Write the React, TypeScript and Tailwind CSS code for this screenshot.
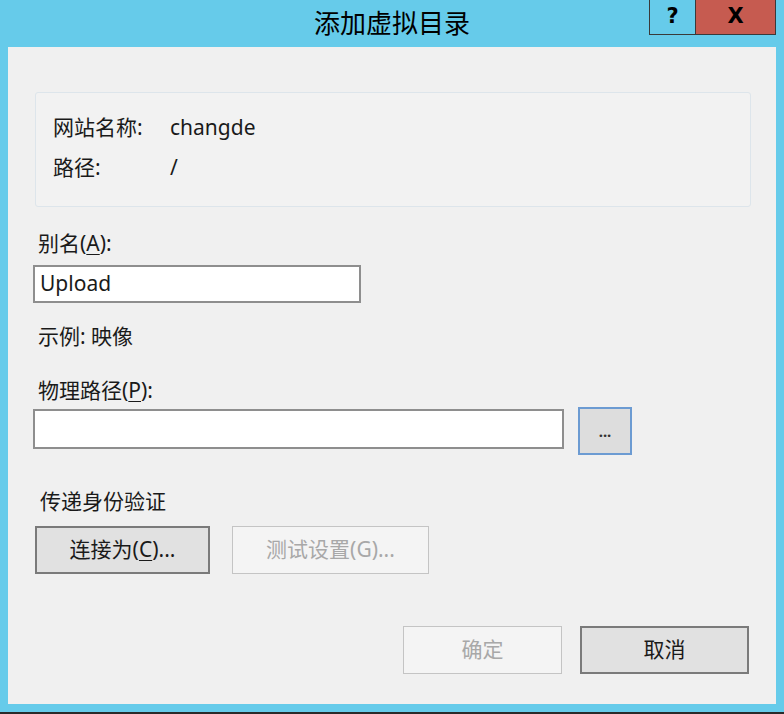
const ui = { fontFamily: '"Noto Sans", "Noto Sans CJK SC", sans-serif' };
const glyph = { fontFamily: '"DejaVu Sans", sans-serif' };

function Key({ k }: { k: string }) {
  return <span className="underline underline-offset-[3px] decoration-1">{k}</span>;
}

function WinButton({
  children,
  disabled,
  className,
}: {
  children: React.ReactNode;
  disabled?: boolean;
  className?: string;
}) {
  return (
    <div
      className={
        "h-[48px] flex items-center justify-center text-[21px] " +
        (disabled
          ? "bg-[#f4f4f4] border border-[#c4c4c4] text-[#a8a8a8] "
          : "bg-[#e1e1e1] border-2 border-[#7a7a7a] text-[#1a1a1a] ") +
        (className ?? "")
      }
    >
      {children}
    </div>
  );
}

export default function App() {
  return (
    <div className="w-[784px] h-[714px] bg-[#66cbea] flex flex-col" style={ui}>
      {/* Title bar */}
      <div className="h-[47px] grid grid-cols-[1fr_auto_1fr] items-start">
        <div />
        <div className="h-[47px] flex items-center text-[26px] text-black">添加虚拟目录</div>
        <div className="flex justify-end pr-[8px]">
          <div className="flex h-[35px] border border-t-0 border-[#3a3a3a]">
            <div className="w-[46px] flex items-center justify-center border-r border-[#3a3a3a] text-[21px] font-bold text-black" style={glyph}>
              ?
            </div>
            <div className="w-[79px] flex items-center justify-center bg-[#c65b50] text-[21px] font-bold text-black" style={glyph}>
              X
            </div>
          </div>
        </div>
      </div>

      {/* Client area */}
      <div className="mx-[8px] h-[657px] bg-[#f0f0f0] px-[25px] flex flex-col text-[21px] text-[#1a1a1a]">
        <div className="mt-[45px] ml-[2px] w-[716px] h-[115px] border border-[#dde5eb] rounded-[3px] bg-[#f2f2f2] pl-[17px] pt-[21px] flex flex-col gap-[12px]">
          <div className="flex h-[28px] items-center">
            <span className="w-[117px]">网站名称:</span>
            <span>changde</span>
          </div>
          <div className="flex h-[28px] items-center">
            <span className="w-[117px]">路径:</span>
            <span>/</span>
          </div>
        </div>

        <div className="mt-[22px] h-[28px] leading-[28px] pl-[5px]">
          别名(<Key k="A" />):
        </div>
        <div className="mt-[8px] w-[328px] h-[38px] bg-white border-2 border-[#8e8e8e] flex items-center pl-[5px]">
          Upload
        </div>

        <div className="mt-[19px] h-[28px] leading-[28px] pl-[5px]">示例: 映像</div>

        <div className="mt-[26px] h-[28px] leading-[28px] pl-[5px]">
          物理路径(<Key k="P" />):
        </div>
        <div className="mt-[3px] flex items-start gap-[14px]">
          <div className="mt-[2px] w-[531px] h-[40px] bg-white border-2 border-[#8e8e8e]" />
          <div className="w-[54px] h-[48px] bg-[#dddddd] border-2 border-[#6c9bd2] flex items-center justify-center text-[15px] font-bold text-[#333]">
            ...
          </div>
        </div>

        <div className="mt-[32px] h-[28px] leading-[28px] pl-[7px]">传递身份验证</div>
        <div className="mt-[11px] flex gap-[22px] pl-[2px]">
          <WinButton className="w-[175px]">
            连接为(<Key k="C" />)...
          </WinButton>
          <WinButton disabled className="w-[197px]">
            测试设置(G)...
          </WinButton>
        </div>

        <div className="mt-[52px] flex justify-end gap-[18px] pr-[2px]">
          <WinButton disabled className="w-[159px]">
            确定
          </WinButton>
          <WinButton className="w-[169px]">取消</WinButton>
        </div>
      </div>

      <div className="h-[8px]" />
      <div className="h-[2px] bg-[#2a2a2a]" />
    </div>
  );
}
